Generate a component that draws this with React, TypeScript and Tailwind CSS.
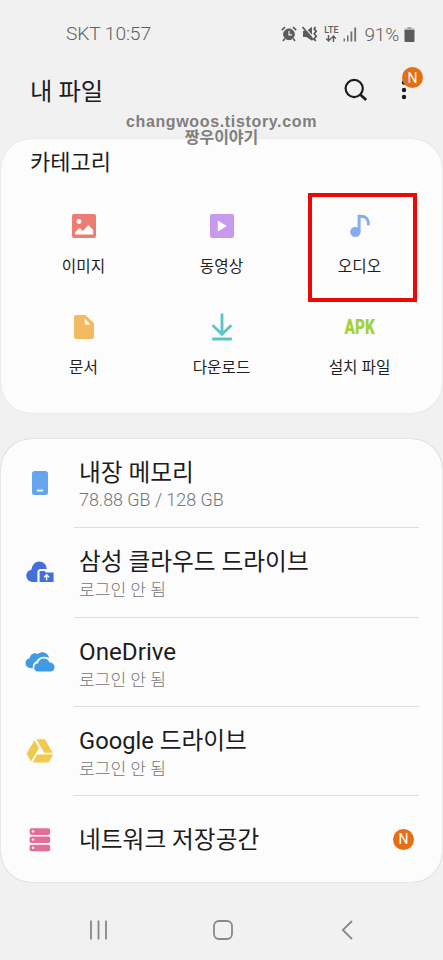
import type { ReactNode } from 'react'

const ImageIcon = () => (
  <svg width="24" height="24" viewBox="0 0 24 24">
    <rect width="24" height="24" rx="2" fill="#ec7d73" />
    <circle cx="7" cy="7.5" r="2.4" fill="#fcfcfc" />
    <path d="M3 20.5v-2l4.6-4.8 3.2 3.2 5.6-5.8 4.8 5v4.4z" fill="#fcfcfc" />
  </svg>
)

const VideoIcon = () => (
  <svg width="24" height="24" viewBox="0 0 24 24">
    <rect width="24" height="24" rx="2" fill="#c79aee" />
    <path d="M7.8 6.4v11.2l9-5.6z" fill="#fcfcfc" />
  </svg>
)

const AudioIcon = () => (
  <svg width="24" height="24" viewBox="0 0 24 24">
    <circle cx="7.4" cy="17.9" r="5.2" fill="#88acf0" />
    <path d="M11.1 18V2.3h2.3c4.7 0 7.3 3.4 7.1 9" fill="none" stroke="#88acf0" strokeWidth="3" />
  </svg>
)

const DocIcon = () => (
  <svg width="24" height="24" viewBox="0 0 24 24">
    <path d="M4 0h9.5L22 8.3V22a2 2 0 0 1-2 2H4a2 2 0 0 1-2-2V2a2 2 0 0 1 2-2z" fill="#f2bb62" />
    <path d="M12.6 3.6V9.4h5.8z" fill="#fcfcfc" />
  </svg>
)

const DownloadIcon = () => (
  <svg width="26" height="28" viewBox="0 0 26 28" fill="none" stroke="#5cc4c4" strokeWidth="2.8">
    <path d="M13 .5v20M3.6 12.2L13 21.3l9.4-9.1M3.2 26h19.6" />
  </svg>
)

const ApkIcon = () => (
  <span className="scale-x-[0.77] text-[20px] leading-none font-black text-[#a3d03c]">APK</span>
)

const PhoneIcon = () => (
  <svg width="16" height="24" viewBox="0 0 16 24">
    <rect width="16" height="24" rx="2.5" fill="#66a6ef" />
    <rect x="5" y="18.6" width="6" height="1.9" fill="#fcfcfc" />
  </svg>
)

const SamsungCloudIcon = () => (
  <svg width="28" height="22" viewBox="0 0 28 22">
    <path
      d="M11.4 21H6.6A6.2 6.2 0 0 1 .3 14.8c0-3.3 2.2-5.7 5.2-6.1C6 3.7 9.5.5 13.2.5c4.2 0 7.2 3 7.6 7.4l-6.2.2c-1.9 0-3.2 1.3-3.2 3.2z"
      fill="#456fd8"
    />
    <path d="M13.6 10h5l1.3 1.4h7.7V21h-14z" fill="#456fd8" />
    <path d="M20.6 19.3v-5M18.1 16.2l2.5-2.4 2.5 2.4" fill="none" stroke="#fcfcfc" strokeWidth="1.4" />
  </svg>
)

const OneDriveIcon = () => (
  <svg width="30" height="20" viewBox="0 0 30 20" fill="#419be2">
    <path d="M8 16.2H5.6A5.1 5.1 0 0 1 .5 11.2c0-2.6 1.7-4.5 4.1-4.9C5.1 3.2 7.4 1.3 10 1.3c1 0 1.9.2 2.8.7C14 .9 15.6.3 17.3.3c3.5 0 6.2 2.3 6.8 5.6-5.3-2.3-11-.6-12.8 3.5C8.8 10 7.3 13 8 16.2z" />
    <path d="M13.2 19.5a4 4 0 0 1-4-4c0-2.3 1.6-4 3.8-4.2.6-2.9 2.9-4.8 5.8-4.8 2.6 0 4.7 1.5 5.6 3.9 3 0 5.2 2.1 5.2 4.8 0 2.5-1.7 4.3-4.1 4.3z" />
  </svg>
)

const GoogleDriveIcon = () => (
  <svg width="28" height="24" viewBox="0 0 28 24" fill="#f0ca4d">
    <path d="M8.5 1.3l4.5 7.8L5 22.5.5 14.8z" />
    <path d="M10.3.3h8.6l7.8 13.5h-8.5z" />
    <path d="M11 15.6h16.2L22.8 23.5H6.6z" />
  </svg>
)

const NetworkIcon = () => (
  <svg width="22" height="24" viewBox="0 0 22 24">
    {[0.3, 8.5, 16.7].map((y) => (
      <g key={y}>
        <rect x=".6" y={y} width="20.6" height="6.6" rx="1.8" fill="#e0709a" />
        <circle cx="4" cy={y + 3.1} r="1.2" fill="#fcfcfc" />
      </g>
    ))}
  </svg>
)

const categories: { label: string; icon: ReactNode; marked?: boolean }[] = [
  { label: '이미지', icon: <ImageIcon /> },
  { label: '동영상', icon: <VideoIcon /> },
  { label: '오디오', icon: <AudioIcon />, marked: true },
  { label: '문서', icon: <DocIcon /> },
  { label: '다운로드', icon: <DownloadIcon /> },
  { label: '설치 파일', icon: <ApkIcon /> },
]

const storages: { title: string; sub?: string; icon: ReactNode; isNew?: boolean }[] = [
  { title: '내장 메모리', sub: '78.88 GB / 128 GB', icon: <PhoneIcon /> },
  { title: '삼성 클라우드 드라이브', sub: '로그인 안 됨', icon: <SamsungCloudIcon /> },
  { title: 'OneDrive', sub: '로그인 안 됨', icon: <OneDriveIcon /> },
  { title: 'Google 드라이브', sub: '로그인 안 됨', icon: <GoogleDriveIcon /> },
  { title: '네트워크 저장공간', icon: <NetworkIcon />, isNew: true },
]

function NewBadge() {
  return (
    <span className="flex h-[21px] w-[21px] items-center justify-center rounded-full bg-[#e66e14] text-[14px] leading-none text-white">
      N
    </span>
  )
}

function StatusBar() {
  return (
    <div className="flex h-[68px] items-center justify-between pr-[28px] pl-[66px] text-[#5f5f5f]">
      <span className="text-[19.2px] leading-none font-light tracking-[-0.1px]">SKT 10:57</span>
      <div className="flex items-center">
        {/* alarm */}
        <svg width="16" height="16" viewBox="0 0 16 16" fill="none" stroke="#5c5c5c">
          <circle cx="8" cy="8.3" r="5.4" fill="#5c5c5c" />
          <path d="M8 5v3.8h3" stroke="#f1f1f1" strokeWidth="1.2" />
          <path d="M.8 4.2L4 1.2M15.2 4.2L12 1.2M3.8 12.5l-1.8 2.5M12.2 12.5l1.8 2.5" strokeWidth="1.7" />
        </svg>
        {/* mute + vibrate */}
        <svg className="ml-[5px]" width="16" height="16" viewBox="0 0 16 16">
          <path d="M1 5h3.5L10 .8v14L4.5 11H1z" fill="#5c5c5c" />
          <path d="M1.5 0L12.5 13" stroke="#f1f1f1" strokeWidth="1.3" />
          <path d="M.5 1L11.5 14" stroke="#5c5c5c" strokeWidth="1.8" />
          <path d="M13.5 1l-1.3 2 2 2.3-2 2.5 2 2.5-2 2.4 1.5 2.3" fill="none" stroke="#5c5c5c" strokeWidth="1.8" />
        </svg>
        <div className="ml-[5px] flex w-[16px] flex-col items-center">
          <span className="text-[9px] leading-[9px] font-medium">LTE</span>
          <svg width="12" height="7" viewBox="0 0 12 7" fill="none" stroke="#5c5c5c" strokeWidth="1.4">
            <path d="M3.5 0v5.8M1.2 3.6l2.3 2.3 2.3-2.3M8.5 7V1.2M6.2 3.4l2.3-2.3 2.3 2.3" />
          </svg>
        </div>
        <svg className="ml-[4px]" width="14" height="15" viewBox="0 0 14 15" fill="#707070">
          <rect x=".5" y="11.5" width="1.5" height="3" />
          <rect x="4" y="8.5" width="1.5" height="6" />
          <rect x="7.5" y="4.5" width="1.8" height="10" />
          <rect x="11.3" y=".5" width="1.8" height="14" />
        </svg>
        <span className="ml-[7px] text-[19px] leading-none font-light tracking-[-0.2px]">91%</span>
        <svg className="ml-[5px]" width="11" height="15" viewBox="0 0 11 15">
          <path d="M3.5 0h4v1.5h3V5h-10V1.500h3z" fill="#aaa" />
          <rect x=".5" y="3" width="10" height="12" rx="1" fill="#5c5c5c" />
        </svg>
      </div>
    </div>
  )
}

function Header() {
  return (
    <header className="relative flex h-[71px] items-start justify-between pt-[5px] pr-[28px] pl-[30px]">
      <h1 className="pt-px text-[24.3px] leading-[36px] text-[#1c1c1c]">내 파일</h1>
      <div className="flex pt-[5px]">
        <svg width="26" height="26" viewBox="0 0 26 26" fill="none" stroke="#1c1c1c" strokeWidth="2.2">
          <circle cx="11.2" cy="10.5" r="8.6" />
          <path d="M17.2 16.5l6 5.4" strokeWidth="2.7" />
        </svg>
        <div className="relative ml-[22px] w-[24px]">
          <svg width="24" height="26" viewBox="0 0 24 26" fill="#1c1c1c">
            <circle cx="13" cy="4.5" r="2.2" />
            <circle cx="13" cy="12" r="2.2" />
            <circle cx="13" cy="19" r="2.2" />
          </svg>
          <div className="absolute -top-[11px] left-[11px]">
            <NewBadge />
          </div>
        </div>
      </div>

      {/* blog watermark, lies over the header and the card edge */}
      <div className="absolute inset-x-0 top-[46px] z-10 text-center font-bold text-[#7f7f7f]">
        <p className="font-['Liberation_Sans'] text-[16px] leading-[16px] tracking-[0.65px]">changwoos.tistory.com</p>
        <p className="text-[16px] leading-[16px]">짱우이야기</p>
      </div>
    </header>
  )
}

export default function App() {
  return (
    <div className="flex h-[960px] w-[443px] flex-col overflow-hidden bg-[#f1f1f1] font-[Roboto,'Noto_Sans_CJK_KR',sans-serif]">
      <StatusBar />
      <Header />

      <section className="mx-px h-[274px] rounded-[30px] bg-[#fcfcfc] shadow-[0_0_1px_rgba(0,0,0,0.2)]">
        <h2 className="pt-[9px] pl-[29px] text-[22px] leading-[30px] text-[#1c1c1c]">카테고리</h2>
        <div className="grid grid-cols-3 px-[13.5px] pt-[15px]">
          {categories.map(({ label, icon, marked }) => (
            <div key={label} className="relative flex h-[101px] flex-col items-center pt-[18px]">
              <div className="flex h-[30px] items-center">{icon}</div>
              <span className="mt-[14px] text-[15.7px] leading-[24px] text-[#1f1f1f]">{label}</span>
              {marked && <div className="absolute top-0 left-[17.5px] h-[109px] w-[109px] border-4 border-[#ee0707]" />}
            </div>
          ))}
        </div>
      </section>

      <section className="mx-px mt-[26px] h-[443px] rounded-[30px] bg-[#fcfcfc] shadow-[0_0_1px_rgba(0,0,0,0.35)]">
        {storages.map(({ title, sub, icon, isNew }, i) => (
          <div key={title} className="flex h-[89.3px] pr-[23px]">
            <div className="flex h-[88px] w-[73px] items-center justify-center pl-[4px]">{icon}</div>
            <div
              className={`flex flex-1 pl-[5px] ${i < storages.length - 1 ? 'border-b border-[#dedede]' : 'h-[88px]'} ${
                sub ? 'flex-col pt-[18px]' : 'items-center justify-between pr-[5px]'
              }`}
            >
              <span className={`text-[#1c1c1c] ${title === 'OneDrive' ? 'text-[24.2px]' : 'text-[23.7px]'} leading-[32px]`}>
                {title}
              </span>
              {sub && (
                <span className={`leading-[24px] font-light text-[#757575] ${i === 0 ? '-mt-px text-[17.9px]' : 'text-[17.1px]'}`}>
                  {sub}
                </span>
              )}
              {isNew && (
                <div className="-mt-[2px]">
                  <NewBadge />
                </div>
              )}
            </div>
          </div>
        ))}
      </section>

      <nav className="flex flex-1 items-center justify-between pt-[18px] pr-[90px] pl-[89px]">
        <svg width="18" height="20" viewBox="0 0 18 20" fill="none" stroke="#888" strokeWidth="1.8">
          <path d="M2 .5v19M9.5 .5v19M17 .5v19" />
        </svg>
        <svg className="-ml-[3px]" width="20" height="20" viewBox="0 0 20 20" fill="none" stroke="#888" strokeWidth="1.8">
          <rect x="1" y="1" width="18" height="18" rx="5" />
        </svg>
        <svg width="12" height="20" viewBox="0 0 12 20" fill="none" stroke="#888" strokeWidth="1.8">
          <path d="M11 1L1.8 10l9.2 9" />
        </svg>
      </nav>
    </div>
  )
}
